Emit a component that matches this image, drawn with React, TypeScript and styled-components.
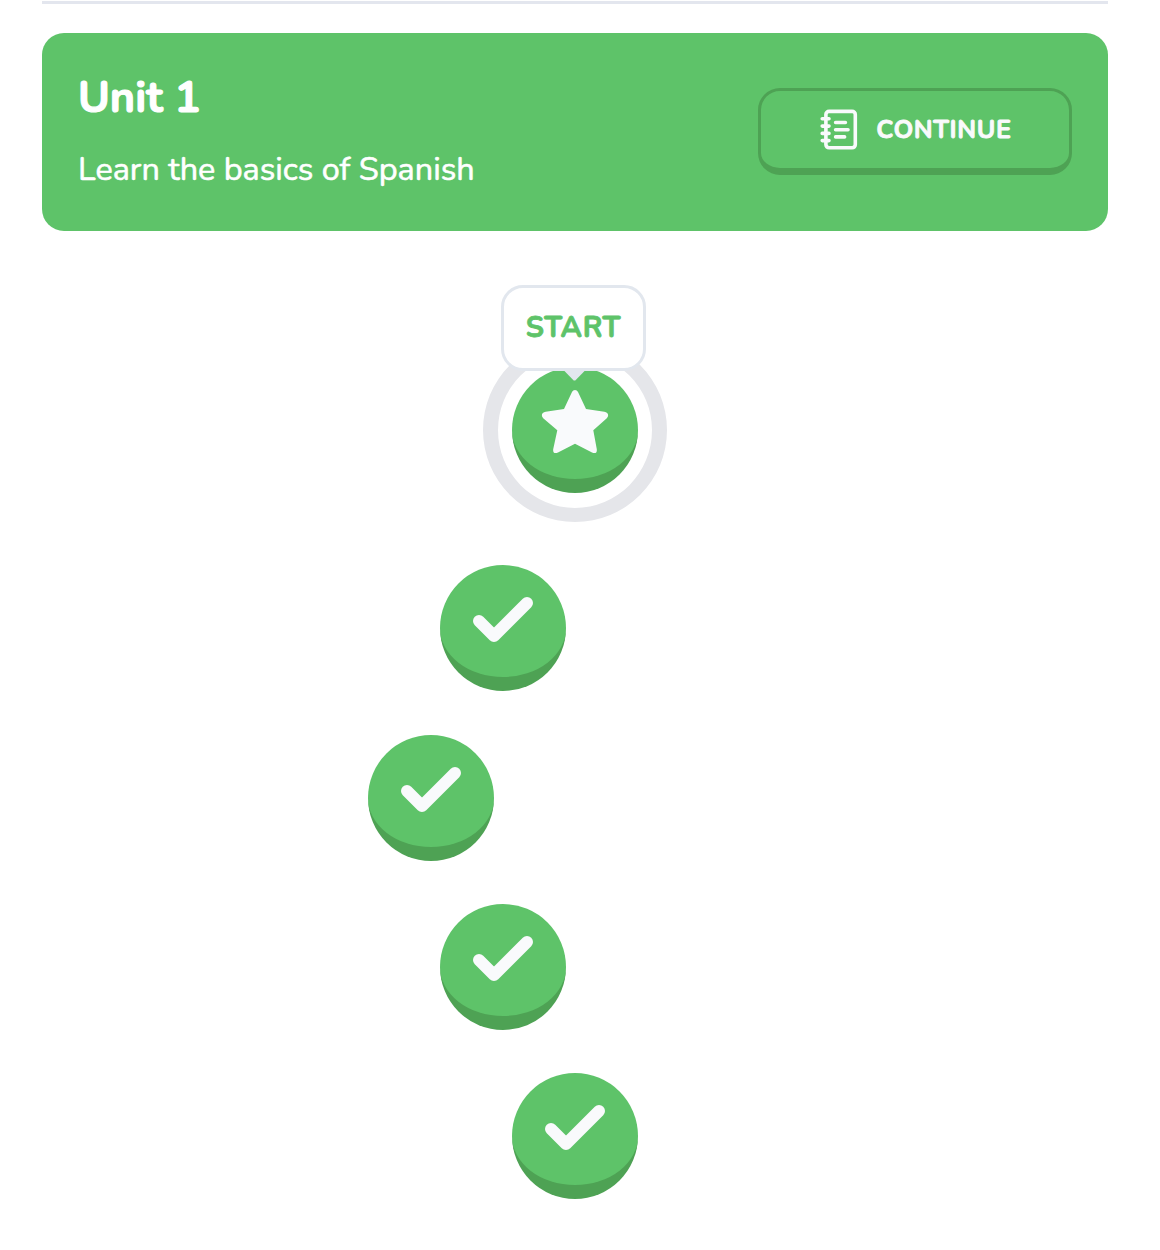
import React from "react";
import styled, { createGlobalStyle } from "styled-components";

const green = "#5ec369";
const darkGreen = "#4ea254";
const soft = "#f9fafc";

const GlobalStyle = createGlobalStyle`
  * { box-sizing: border-box; }
  body {
    margin: 0;
    background: #fff;
    font-family: Nunito, Lato, "Open Sans", sans-serif;
    -webkit-font-smoothing: antialiased;
  }
`;

const Page = styled.main`
  width: 1160px;
  height: 1250px;
  overflow: hidden;
  padding: 1px 52px 0 42px;
`;

const Divider = styled.hr`
  height: 3px;
  margin: 0 0 29px;
  border: 0;
  background: #e3e6ee;
`;

const Banner = styled.header`
  height: 198px;
  display: flex;
  align-items: center;
  justify-content: space-between;
  padding: 0 36px 1px;
  border-radius: 22px;
  background: ${green};
  color: #fff;
`;

const Intro = styled.div`
  display: flex;
  flex-direction: column;
  gap: 17px;
  padding-bottom: 1px;
`;

const Title = styled.h1`
  margin: 0;
  font-size: 43.2px;
  line-height: 58px;
  font-weight: 700;
  -webkit-text-stroke: 1.1px currentColor;
`;

const Subtitle = styled.p`
  margin: 0;
  font-size: 32.4px;
  line-height: 50px;
  font-weight: 400;
  -webkit-text-stroke: 0.6px currentColor;
`;

const ContinueButton = styled.button`
  width: 314px;
  height: 87px;
  display: flex;
  align-items: center;
  justify-content: center;
  gap: 18px;
  padding: 0 0 0 2px;
  border: 3px solid ${darkGreen};
  border-bottom-width: 7px;
  border-radius: 22px;
  background: transparent;
  color: ${soft};
  font: 700 25.2px/36px Nunito, Lato, sans-serif;
  letter-spacing: 0.63px;
  -webkit-text-stroke: 0.8px currentColor;
`;

const Path = styled.ol`
  list-style: none;
  margin: 136px 0 0;
  padding: 0;
  display: flex;
  flex-direction: column;
  align-items: center;
`;

const Step = styled.li<{ $shift: number; $gap: number }>`
  padding-right: ${(p) => p.$shift * 2}px;
  margin-bottom: ${(p) => p.$gap}px;
`;

const Current = styled.div`
  position: relative;
`;

const Ring = styled.div`
  position: absolute;
  inset: -29px;
  border: 15px solid #e5e6ea;
  border-bottom-width: 14px;
  border-radius: 50%;
`;

const Lesson = styled.button`
  width: 126px;
  height: 126px;
  display: flex;
  align-items: center;
  justify-content: center;
  padding: 0 0 2px;
  border: 0 solid ${darkGreen};
  border-bottom-width: 14px;
  border-radius: 50%;
  background: ${green};
`;

const Tooltip = styled.div`
  position: absolute;
  left: -11px;
  top: -82px;
  width: 145px;
  height: 86px;
  display: flex;
  align-items: center;
  justify-content: center;
  padding-bottom: 1px;
  border: 3px solid #e2e7ee;
  border-radius: 22px;
  background: #fff;
  color: ${green};
  font-size: 28.8px;
  font-weight: 700;
  letter-spacing: 0.72px;
  -webkit-text-stroke: 0.8px currentColor;

  &::after {
    content: "";
    position: absolute;
    top: 100%;
    left: 57.5px;
    width: 26px;
    height: 13px;
    background: #e2e7ee;
    clip-path: polygon(0 0, 100% 0, 53% 97%, 47% 97%);
  }
`;

const NotebookIcon = () => (
  <svg width="38" height="42" viewBox="0 0 38 42" fill="none" stroke="currentColor" strokeWidth="3.6" strokeLinecap="round">
    <rect x="5.9" y="2.4" width="29.4" height="36.4" rx="3.2" />
    <path d="M2.2 9.8H9M2.2 17.1H9M2.2 24.4H9M2.2 31.6H9" />
    <path d="M15.6 13.5H25.4M15.6 20.7H28M15.6 27.9H24.6" />
  </svg>
);

const StarIcon = () => (
  <svg width="68" height="66" viewBox="0 0 68 66" fill={soft}>
    <path d="M31 3.1C32.2.3 35.8.3 37 3.1L45 20L63.3 22.8C67 23.3 68.4 26.6 65.8 29.2L52.3 41.3L55.8 60.3C56.2 63.8 54.2 65 51 63.4L34 54.7L17 63.4C13.8 65 11.8 63.8 12.2 60.3L16.3 41.3L2.2 29.2C-.4 26.6 1 23.3 4.7 22.8L23 20Z" />
  </svg>
);

const CheckIcon = () => (
  <svg width="60" height="46" viewBox="0 0 60 46" fill="none" stroke={soft} strokeWidth="12" strokeLinecap="round" strokeLinejoin="round">
    <path d="M6 24L21 39L54 6" />
  </svg>
);

const completed = [
  { shift: 72, gap: 44 },
  { shift: 144, gap: 43 },
  { shift: 72, gap: 43 },
  { shift: 0, gap: 0 },
];

export default function App() {
  return (
    <>
      <GlobalStyle />
      <Page>
        <Divider />
        <Banner>
          <Intro>
            <Title>Unit 1</Title>
            <Subtitle>Learn the basics of Spanish</Subtitle>
          </Intro>
          <ContinueButton>
            <NotebookIcon />
            CONTINUE
          </ContinueButton>
        </Banner>
        <Path>
          <Step $shift={0} $gap={72}>
            <Current>
              <Ring />
              <Lesson aria-label="Current lesson">
                <StarIcon />
              </Lesson>
              <Tooltip>START</Tooltip>
            </Current>
          </Step>
          {completed.map((step, index) => (
            <Step key={index} $shift={step.shift} $gap={step.gap}>
              <Lesson aria-label="Completed lesson">
                <CheckIcon />
              </Lesson>
            </Step>
          ))}
        </Path>
      </Page>
    </>
  );
}
